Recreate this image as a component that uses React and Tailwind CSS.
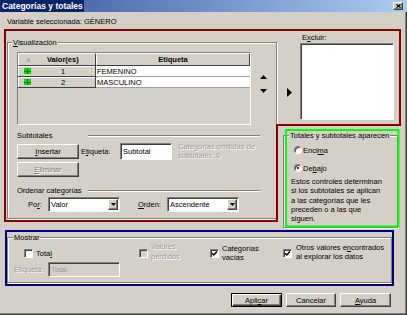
import React from "react";

const raised =
  "bg-[#d4d0c8] border border-t-white border-l-white border-r-[#404040] border-b-[#404040] shadow-[inset_-1px_-1px_0_#808080]";
const sunken =
  "border border-t-[#808080] border-l-[#808080] border-r-white border-b-white shadow-[inset_1px_1px_0_#404040]";

function Group({ label, className, labelClass, children }) {
  return (
    <div
      className={`relative border border-[#808080] shadow-[1px_1px_0_#ffffff,inset_1px_1px_0_#ffffff] ${className}`}
    >
      <span
        className={`absolute top-[-5px] bg-[#d4d0c8] px-[1px] leading-[9px] whitespace-nowrap ${labelClass}`}
      >
        {label}
      </span>
      {children}
    </div>
  );
}

function Etched({ className }) {
  return (
    <div
      className={`h-[2px] border-t border-t-[#808080] border-b border-b-white ${className}`}
    />
  );
}

function Check({ checked, disabled }) {
  return (
    <div
      className={`w-[9px] h-[9px] shrink-0 ${sunken} ${
        disabled ? "bg-[#d4d0c8]" : "bg-white"
      } flex items-center justify-center`}
    >
      {checked && (
        <svg width="7" height="7" viewBox="0 0 7 7">
          <path d="M1 3.2 L2.8 5 L6 1.4" stroke="#000" strokeWidth="1.5" fill="none" />
        </svg>
      )}
    </div>
  );
}

function Radio({ checked }) {
  return (
    <div className="w-[8px] h-[8px] shrink-0 rounded-full border border-t-[#808080] border-l-[#808080] border-r-white border-b-white bg-white shadow-[inset_1px_1px_0_#404040] flex items-center justify-center">
      {checked && <div className="w-[2px] h-[2px] rounded-full bg-black" />}
    </div>
  );
}

function GreenIcon() {
  return (
    <div className="w-[7px] h-[6px] grid grid-cols-2 gap-[1px] bg-[#008000] p-0 shrink-0">
      <div className="bg-[#00e000]" />
      <div className="bg-[#00e000]" />
      <div className="bg-[#00e000]" />
      <div className="bg-[#00e000]" />
    </div>
  );
}

function Select({ value, className }) {
  return (
    <div className={`h-[15px] bg-white ${sunken} flex items-center ${className}`}>
      <span className="flex-1 pl-[2px] whitespace-nowrap">{value}</span>
      <div className={`w-[10px] h-[11px] mr-[1px] ${raised} flex items-center justify-center`}>
        <svg width="5" height="3" viewBox="0 0 5 3">
          <path d="M0 0 L5 0 L2.5 3 Z" fill="#000" />
        </svg>
      </div>
    </div>
  );
}

function Row({ n, label }) {
  return (
    <div className="flex h-[11px]">
      <div className="w-[78px] flex items-center bg-[#d4d0c8] border-r border-b border-[#404040] shadow-[inset_1px_1px_0_#ffffff]">
        <div className="ml-[6px]">
          <GreenIcon />
        </div>
        <span className="flex-1 text-center">{n}</span>
      </div>
      <div className="flex-1 bg-white border-b border-[#a0a0a0] pl-[1px] flex items-center">
        {label}
      </div>
    </div>
  );
}

export default function App() {
  return (
    <div className="relative w-[407px] h-[315px] overflow-hidden bg-[#d4d0c8] font-['Liberation_Sans',Arial,sans-serif] text-[7.5px] leading-[9px] text-black shadow-[inset_-1px_-1px_0_#404040,inset_-2px_-2px_0_#808080]">
      {/* Title bar */}
      <div className="flex h-[12px]">
        <div className="w-[84px] bg-[#0a246a] text-white font-bold text-[8.5px] leading-[12px] pl-[2px] whitespace-nowrap">
          Categorías y totales
        </div>
        <div className="flex-1 flex items-center justify-end pr-[4px] bg-linear-to-r from-[#4e6cae] to-[#abcdf0]">
          <div className={`w-[10px] h-[8px] ${raised} flex items-center justify-center`}>
            <svg width="5" height="4" viewBox="0 0 5 4">
              <path d="M0.5 0.3 L4.5 3.7 M4.5 0.3 L0.5 3.7" stroke="#000" strokeWidth="1.2" />
            </svg>
          </div>
        </div>
      </div>

      <div className="px-[7px]">
        <div className="mt-[5px] whitespace-nowrap">Variable seleccionada: GÉNERO</div>

        <div className="mt-[7px] flex items-start">
          {/* Visualización */}
          <Group
            label={
              <>
                <u>V</u>isualización
              </>
            }
            labelClass="left-[4px]"
            className="mt-[9px] w-[270px] h-[177px] pl-[9px] pt-[9px]"
          >
            <div className="flex items-start">
              <div className="w-[234px] h-[73px] border border-t-[#808080] border-l-[#808080] border-r-white border-b-white bg-[#d4d0c8] flex flex-col">
                <div className="flex h-[13px] font-bold">
                  <div className="w-[78px] relative flex items-center pl-[28px] bg-[#d4d0c8] border border-t-white border-l-white border-r-[#404040] border-b-[#404040]">
                    <svg
                      className="absolute left-[7px] top-[3px]"
                      width="5"
                      height="5"
                      viewBox="0 0 5 5"
                    >
                      <path d="M2.5 0 L5 5 L0 5 Z" fill="#b0b0b0" />
                    </svg>
                    Valor(es)
                  </div>
                  <div className="flex-1 flex items-center justify-center bg-[#d4d0c8] border border-t-white border-l-white border-r-[#404040] border-b-[#404040]">
                    Etiqueta
                  </div>
                </div>
                <Row n="1" label="FEMENINO" />
                <Row n="2" label="MASCULINO" />
              </div>
              <div className="ml-[9px] w-[7px] flex flex-col">
                <svg className="mt-[23px]" width="7" height="4" viewBox="0 0 7 4">
                  <path d="M3.5 0 L7 4 L0 4 Z" fill="#000" />
                </svg>
                <svg className="mt-[10px]" width="7" height="4" viewBox="0 0 7 4">
                  <path d="M0 0 L7 0 L3.5 4 Z" fill="#000" />
                </svg>
              </div>
            </div>

            {/* Subtotales */}
            <div className="mt-[6px] flex items-center h-[9px]">
              <span className="w-[71px]">Subtotales</span>
              <Etched className="w-[172px]" />
            </div>
            <div className="mt-[3px] flex items-start">
              <div className="w-[62px] mt-[1px] flex flex-col">
                <div className={`h-[15px] ${raised} flex items-center justify-center`}>
                  <span>
                    <u>I</u>nsertar
                  </span>
                </div>
                <div
                  className={`mt-[3px] h-[15px] ${raised} flex items-center justify-center text-[#808080] [text-shadow:1px_1px_0_#ffffff]`}
                >
                  <span>
                    <u>E</u>liminar
                  </span>
                </div>
              </div>
              <div className="ml-[2px] w-[39px] h-[17px] flex items-center">
                <span>
                  E<u>t</u>iqueta:
                </span>
              </div>
              <div className={`w-[52px] h-[17px] bg-white ${sunken} flex items-center pl-[2px]`}>
                Subtotal
              </div>
              <div className="ml-[6px] mt-[-1px] text-[#9a9a9a] leading-[9px] [text-shadow:1px_1px_0_#ffffff]">
                Categorías omitidas de
                <br />
                subtotales: 0
              </div>
            </div>

            {/* Ordenar */}
            <div className="mt-[9px] flex items-center h-[9px]">
              <span className="w-[71px] whitespace-nowrap">Ordenar categorías</span>
              <Etched className="w-[172px]" />
            </div>
            <div className="mt-[2px] flex items-center pl-[11px]">
              <span className="w-[20px]">
                Po<u>r</u>:
              </span>
              <Select value="Valor" className="w-[72px]" />
              <span className="ml-[18px] w-[29px]">
                <u>O</u>rden:
              </span>
              <Select value="Ascendente" className="w-[72px]" />
            </div>
          </Group>

          {/* Right column */}
          <div className="ml-[6px] w-[115px]">
            <div className="pl-[19px] h-[9px]">
              E<u>x</u>cluir:
            </div>
            <div className="flex items-start">
              <div className="w-[17px] pt-[46px] pl-[4px]">
                <svg width="5" height="9" viewBox="0 0 5 9">
                  <path d="M0 0 L5 4.5 L0 9 Z" fill="#000" />
                </svg>
              </div>
              <div className={`mt-[1px] w-[94px] h-[77px] bg-white ${sunken}`} />
            </div>

            <Group
              label="Totales y subtotales aparecen"
              labelClass="left-[5px]"
              className="mt-[15px] w-[115px] h-[93px] pl-[7px] pt-[10px]"
            >
              <div className="ml-[3px] flex items-center h-[8px]">
                <Radio />
                <span className="ml-[1px]">
                  Enci<u>m</u>a
                </span>
              </div>
              <div className="ml-[3px] mt-[10px] flex items-center h-[8px]">
                <Radio checked />
                <span className="ml-[1px]">
                  De<u>b</u>ajo
                </span>
              </div>
              <div className="mt-[5px] leading-[9.25px]">
                Estos controles determinan
                <br />
                si los subtotales se aplican
                <br />a las categorías que les
                <br />
                preceden o a las que
                <br />
                siguen.
              </div>
            </Group>
          </div>
        </div>

        {/* Mostrar */}
        <Group
          label="Mostrar"
          labelClass="left-[5px]"
          className="mt-[9px] w-[385px] h-[46px] flex items-start"
        >
          <div className="w-[112px] pl-[6px] pt-[11px]">
            <div className="ml-[10px] flex items-center h-[9px]">
              <Check />
              <span className="ml-[3px]">
                Tota<u>l</u>
              </span>
            </div>
            <div className="mt-[4px] flex items-center">
              <span className="w-[34px] text-[#9a9a9a] [text-shadow:1px_1px_0_#ffffff]">
                Etiqueta:
              </span>
              <div
                className={`w-[72px] h-[15px] bg-[#d4d0c8] ${sunken} flex items-center pl-[2px] text-[#9a9a9a]`}
              >
                Total
              </div>
            </div>
          </div>
          <div className="ml-[19px] w-[71px] flex items-start">
            <div className="mt-[11px]">
              <Check disabled />
            </div>
            <div className="ml-[3px] mt-[4px] leading-[10px] text-[#9a9a9a] [text-shadow:1px_1px_0_#ffffff]">
              Valores
              <br />
              perdidos
            </div>
          </div>
          <div className="w-[73px] flex items-start">
            <div className="mt-[11px]">
              <Check checked />
            </div>
            <div className="ml-[3px] mt-[6px] leading-[9px]">
              Categorías
              <br />
              vacías
            </div>
          </div>
          <div className="flex items-start">
            <div className="mt-[11px]">
              <Check checked />
            </div>
            <div className="ml-[4px] mt-[5px] leading-[9px] whitespace-nowrap">
              Otros valores e<u>n</u>contrados
              <br />
              al explorar los datos
            </div>
          </div>
        </Group>

        {/* Buttons */}
        <div className="mt-[10px] flex justify-end pr-[9px] gap-[4px]">
          <div className="w-[51px] h-[14px] bg-[#d4d0c8] border border-black shadow-[inset_1px_1px_0_#ffffff,inset_-1px_-1px_0_#404040,inset_-2px_-2px_0_#808080] flex items-center justify-center">
            <span>
              Apli<u>c</u>ar
            </span>
          </div>
          <div className={`w-[50px] h-[14px] ${raised} flex items-center justify-center`}>
            Cancelar
          </div>
          <div className={`w-[51px] h-[14px] ${raised} flex items-center justify-center`}>
            <span>
              <u>A</u>yuda
            </span>
          </div>
        </div>
      </div>

      {/* Annotation overlays */}
      <svg
        className="absolute left-0 top-0 pointer-events-none"
        width="407"
        height="315"
        viewBox="0 0 407 315"
      >
        <path
          d="M5 30 L400 30 L400 125 L277 125 L277 221 L5 221 Z"
          fill="none"
          stroke="#8b0000"
          strokeWidth="2"
        />
        <rect x="286" y="130" width="112.5" height="96.5" fill="none" stroke="#00ff00" strokeWidth="2" />
        <rect x="6" y="231" width="387" height="54" fill="none" stroke="#000080" strokeWidth="2" />
      </svg>
    </div>
  );
}
